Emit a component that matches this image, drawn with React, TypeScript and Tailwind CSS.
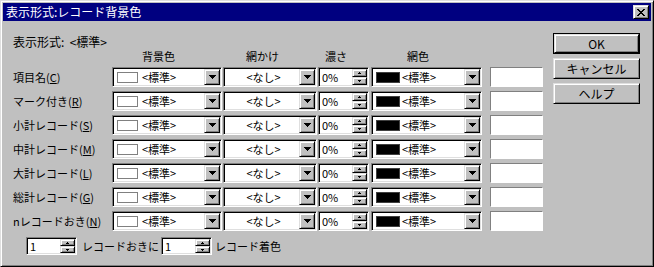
import React from "react";

const SUNKEN =
  "border border-t-[#808080] border-l-[#808080] border-b-white border-r-white shadow-[inset_1px_1px_0_#000,inset_-1px_-1px_0_#dfdfdf]";
const RAISED =
  "bg-[#c0c0c0] border border-t-[#dfdfdf] border-l-[#dfdfdf] border-b-black border-r-black shadow-[inset_1px_1px_0_#fff,inset_-1px_-1px_0_#808080]";

function DownTri() {
  return (
    <svg width="7" height="4" viewBox="0 0 7 4" shapeRendering="crispEdges">
      <rect x="0" y="0" width="7" height="1" fill="#000" />
      <rect x="1" y="1" width="5" height="1" fill="#000" />
      <rect x="2" y="2" width="3" height="1" fill="#000" />
      <rect x="3" y="3" width="1" height="1" fill="#000" />
    </svg>
  );
}

function DropBtn() {
  return (
    <div className={`${RAISED} w-[16px] h-[16px] ml-auto shrink-0 flex items-center justify-center`}>
      <DownTri />
    </div>
  );
}

function SmallTri({ up }: { up?: boolean }) {
  return (
    <svg width="3" height="2" viewBox="0 0 3 2" shapeRendering="crispEdges">
      {up ? (
        <>
          <rect x="1" y="0" width="1" height="1" fill="#000" />
          <rect x="0" y="1" width="3" height="1" fill="#000" />
        </>
      ) : (
        <>
          <rect x="0" y="0" width="3" height="1" fill="#000" />
          <rect x="1" y="1" width="1" height="1" fill="#000" />
        </>
      )}
    </svg>
  );
}

function Spin({ value, className }: { value: string; className: string }) {
  return (
    <div className={`${SUNKEN} bg-white p-[1px] flex ${className}`}>
      <div className="flex-1 flex items-center pl-[2px]">{value}</div>
      <div className="w-[15px] flex flex-col">
        <div className={`${RAISED} flex-1 flex items-center justify-center`}>
          <SmallTri up />
        </div>
        <div className={`${RAISED} flex-1 flex items-center justify-center`}>
          <SmallTri />
        </div>
      </div>
    </div>
  );
}

function ComboSwatch({ black, className }: { black?: boolean; className: string }) {
  return (
    <div className={`${SUNKEN} bg-white h-[20px] p-[1px] flex items-center ${className}`}>
      <div
        className={
          black
            ? "ml-[3px] w-[24px] h-[11px] bg-black border border-[#404040]"
            : "ml-[3px] w-[21px] h-[11px] bg-white border border-[#808080]"
        }
      />
      <span className={black ? "ml-[2px]" : "ml-[4px]"}>&lt;標準&gt;</span>
      <DropBtn />
    </div>
  );
}

function ComboNone({ className }: { className: string }) {
  return (
    <div className={`${SUNKEN} bg-white h-[20px] p-[1px] flex items-center ${className}`}>
      <span className="flex-1 text-center pl-[3px]">&lt;なし&gt;</span>
      <DropBtn />
    </div>
  );
}

function CloseGlyph() {
  const rows = [
    [0, 1, 6, 7],
    [1, 2, 5, 6],
    [2, 3, 4, 5],
    [3, 4],
    [2, 3, 4, 5],
    [1, 2, 5, 6],
    [0, 1, 6, 7],
  ];
  return (
    <svg width="8" height="7" viewBox="0 0 8 7" shapeRendering="crispEdges">
      {rows.map((r, y) =>
        r.map((x) => <rect key={`${x}-${y}`} x={x} y={y} width="1" height="1" fill="#000" />)
      )}
    </svg>
  );
}

function Btn({ label, def }: { label: string; def?: boolean }) {
  if (def) {
    return (
      <div className="h-[21px] border border-black">
        <div className={`${RAISED} h-full flex items-center justify-center`}>{label}</div>
      </div>
    );
  }
  return <div className={`${RAISED} h-[21px] flex items-center justify-center`}>{label}</div>;
}

const rows: [string, string][] = [
  ["項目名", "C"],
  ["マーク付き", "R"],
  ["小計レコード", "S"],
  ["中計レコード", "M"],
  ["大計レコード", "L"],
  ["総計レコード", "G"],
  ["nレコードおき", "N"],
];

export default function App() {
  return (
    <div className="w-[654px] h-[267px] bg-[#c0c0c0] border border-t-[#dfdfdf] border-l-[#dfdfdf] border-b-black border-r-black shadow-[inset_1px_1px_0_#fff,inset_-1px_-1px_0_#808080] p-[2px] flex flex-col font-['Noto_Sans_CJK_JP',sans-serif] text-black text-[11px] leading-[12px] overflow-hidden">
      <div className="h-[18px] shrink-0 bg-[#000080] flex items-center pl-[3px] pr-[2px]">
        <span className="text-white text-[12px] leading-[14px]">表示形式:レコード背景色</span>
        <div className={`${RAISED} ml-auto w-[16px] h-[14px] flex items-center justify-center`}>
          <CloseGlyph />
        </div>
      </div>
      <div className="flex flex-1">
        <div className="pl-[10px] flex flex-col">
          <div className="mt-[15px] h-[12px] text-[12px] whitespace-pre">表示形式:  &lt;標準&gt;</div>
          <div className="mt-[2px] h-[12px] flex">
            <span className="ml-[129px] w-[36px]">背景色</span>
            <span className="ml-[68px] w-[36px]">網かけ</span>
            <span className="ml-[43px] w-[24px]">濃さ</span>
            <span className="ml-[58px]">網色</span>
          </div>
          <div className="mt-[5px] flex flex-col gap-[4px]">
            {rows.map(([name, key]) => (
              <div key={key} className="h-[20px] flex items-center">
                <div className="w-[99px] whitespace-nowrap">
                  {name}(<span className="underline underline-offset-1">{key}</span>)
                </div>
                <ComboSwatch className="w-[110px]" />
                <ComboNone className="ml-[1px] w-[94px]" />
                <Spin value="0%" className="ml-[1px] w-[51px] h-[20px]" />
                <ComboSwatch black className="ml-[2px] w-[111px]" />
                <div className="ml-[8px] w-[53px] h-[20px] bg-white border border-t-[#808080] border-l-[#808080] border-b-white border-r-white" />
              </div>
            ))}
          </div>
          <div className="mt-[6px] h-[18px] flex items-center">
            <Spin value="1" className="ml-[13px] w-[51px] h-[18px]" />
            <span className="ml-[5px] whitespace-nowrap">レコードおきに</span>
            <Spin value="1" className="ml-[2px] w-[51px] h-[18px]" />
            <span className="ml-[3px] whitespace-nowrap">レコード着色</span>
          </div>
        </div>
        <div className="ml-auto mr-[11px] mt-[12px] w-[87px] flex flex-col gap-[4px] text-[12px]">
          <Btn label="OK" def />
          <Btn label="キャンセル" />
          <Btn label="ヘルプ" />
        </div>
      </div>
    </div>
  );
}
